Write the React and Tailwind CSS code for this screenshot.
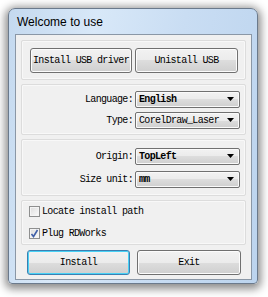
import React from 'react'

const mono = { fontFamily: '"Liberation Mono", "DejaVu Sans Mono", monospace' }

function Button({ children, primary, className = '' }) {
  return (
    <div
      className={`h-[25px] flex items-center justify-center rounded-[3px] border text-[10px] tracking-[-0.67px] text-black bg-[linear-gradient(#f2f2f2_0%,#ebebeb_50%,#dddddd_50%,#cfcfcf_100%)] ${
        primary
          ? 'border-[#3c7fb1] shadow-[inset_0_0_0_1px_#48d1f5]'
          : 'border-[#707070] shadow-[inset_0_0_0_1px_#fcfcfc]'
      } ${className}`}
      style={mono}
    >
      {children}
    </div>
  )
}

function Combo({ label, value, bold }) {
  return (
    <div className="flex items-center justify-end gap-[2px]">
      <span className="text-[10px] tracking-[-0.67px] text-black" style={mono}>{label}</span>
      <div className="w-[105px] h-[17px] flex items-center justify-between pl-[3px] pr-[5px] rounded-[2px] border border-[#707070] bg-[linear-gradient(#f2f2f2_0%,#ebebeb_50%,#dddddd_50%,#cfcfcf_100%)] shadow-[inset_0_0_0_1px_#fafafa]">
        <span className={`text-[10px] tracking-[-0.67px] text-black ${bold ? 'font-bold' : ''}`} style={mono}>{value}</span>
        <svg width="7" height="4" viewBox="0 0 7 4"><path d="M0 0h7L3.5 4z" fill="#000" /></svg>
      </div>
    </div>
  )
}

function Check({ label, checked }) {
  return (
    <div className="flex items-center gap-[2px]">
      <div className="w-[11px] h-[11px] border border-[#8e8f8f] bg-[linear-gradient(135deg,#dcdcdc,#fbfbfb)] flex items-center justify-center shadow-[inset_0_0_0_1px_#f4f4f4]">
        {checked && (
          <svg width="9" height="9" viewBox="0 0 9 9">
            <path d="M1.5 5 L3.5 7.5 L7.5 1" fill="none" stroke="#4060a8" strokeWidth="1.6" />
          </svg>
        )}
      </div>
      <span className="text-[10px] tracking-[-0.67px] text-black" style={mono}>{label}</span>
    </div>
  )
}

const section = 'rounded-[2px] border border-[#dcdcdc] shadow-[inset_0_0_0_1px_#f8f8f8] bg-[#f0f0f0]'

export default function App() {
  return (
    <div className="w-[268px] h-[297px] bg-white overflow-hidden">
      <div className="ml-[8px] mt-[8px] w-[250px] h-[276px] flex flex-col rounded-t-[7px] rounded-b-[4px] border border-[#6b7a8c] bg-[linear-gradient(100deg,#c4d9ef_0%,#d8e8f8_30%,#c9ddf3_60%,#bcd4ee_100%)] shadow-[0px_2px_8px_3px_rgba(0,0,0,0.45)]">
        <div className="h-[25px] flex items-center pl-[8px]">
          <span className="text-[12px] text-black" style={{ fontFamily: '"Liberation Sans", Arial, sans-serif' }}>
            Welcome to use
          </span>
        </div>
        <div className="flex-1 ml-[6px] mr-[5px] mb-[3px] border border-[#8a97a6] bg-[#f0f0f0] px-[5px] pt-[5px] flex flex-col">
          <div className={`${section} h-[40px] flex items-center pl-[8px] gap-[3px]`}>
            <Button className="w-[102px]">Install USB driver</Button>
            <Button className="w-[103px]">Unistall USB</Button>
          </div>
          <div className={`${section} mt-[4px] h-[51px] flex flex-col justify-center gap-[4px] pr-[5px]`}>
            <Combo label="Language:" value="English" bold />
            <Combo label="Type:" value="CorelDraw_Laser" />
          </div>
          <div className={`${section} mt-[4px] h-[57px] flex flex-col justify-center gap-[6px] pr-[5px]`}>
            <Combo label="Origin:" value="TopLeft" bold />
            <Combo label="Size unit:" value="mm" bold />
          </div>
          <div className={`${section} mt-[4px] h-[45px] flex flex-col justify-center gap-[7px] pl-[7px]`}>
            <Check label="Locate install path" />
            <Check label="Plug RDWorks" checked />
          </div>
          <div className="flex-1 flex items-center pl-[6px] gap-[7px]">
            <Button primary className="w-[103px] h-[23px]">Install</Button>
            <Button className="w-[104px] h-[23px]">Exit</Button>
          </div>
        </div>
      </div>
    </div>
  )
}
